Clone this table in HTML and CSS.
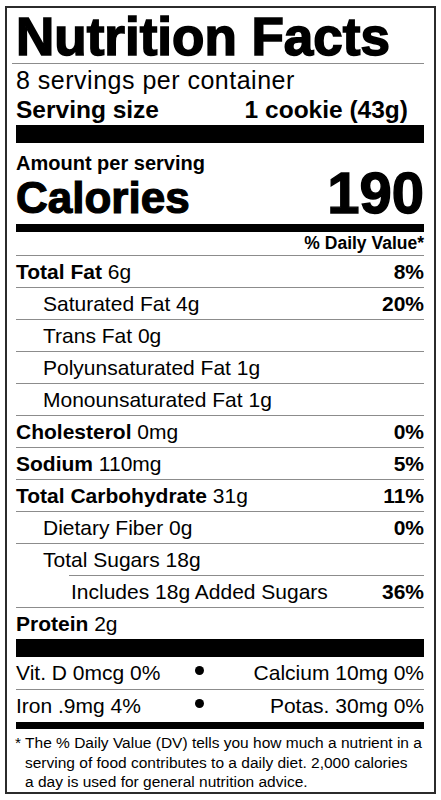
FILE: index.html
```html
<!DOCTYPE html>
<html lang="en">
<head>
  <meta charset="UTF-8">
  <meta name="viewport" content="width=device-width, initial-scale=1.0">
  <title>Nutrition Facts</title>
  <link rel="stylesheet" href="styles.css">
</head>
<body>
  <div class="label">
    <h1 class="title">Nutrition Facts</h1>
    <p class="servings">8 servings per container</p>
    <div class="serving-size">
      <span>Serving size</span>
      <span>1 cookie (43g)</span>
    </div>
    <div class="bar bar-thick"></div>

    <p class="amount">Amount per serving</p>
    <div class="calories">
      <span class="cal-label">Calories</span>
      <span class="cal-value">190</span>
    </div>
    <div class="bar bar-mid"></div>

    <div class="dv-head">% Daily Value*</div>

    <div class="row"><span><b>Total Fat</b> 6g</span><b>8%</b></div>
    <div class="row sub"><span>Saturated Fat 4g</span><b>20%</b></div>
    <div class="row sub"><span>Trans Fat 0g</span></div>
    <div class="row sub"><span>Polyunsaturated Fat 1g</span></div>
    <div class="row sub"><span>Monounsaturated Fat 1g</span></div>
    <div class="row"><span><b>Cholesterol</b> 0mg</span><b>0%</b></div>
    <div class="row"><span><b>Sodium</b> 110mg</span><b>5%</b></div>
    <div class="row"><span><b>Total Carbohydrate</b> 31g</span><b>11%</b></div>
    <div class="row sub"><span>Dietary Fiber 0g</span><b>0%</b></div>
    <div class="row sub"><span>Total Sugars 18g</span></div>
    <div class="row added"><span>Includes 18g Added Sugars</span><b>36%</b></div>
    <div class="row"><span><b>Protein</b> 2g</span></div>
    <div class="bar bar-thick bar-flush"></div>

    <div class="mineral first">
      <span>Vit. D 0mcg 0%</span>
      <span class="dot"></span>
      <span class="right">Calcium 10mg 0%</span>
    </div>
    <div class="mineral">
      <span>Iron .9mg 4%</span>
      <span class="dot"></span>
      <span class="right">Potas. 30mg 0%</span>
    </div>
    <div class="bar bar-foot"></div>

    <p class="footnote">* The % Daily Value (DV) tells you how much a nutrient in a<br>serving of food contributes to a daily diet. 2,000 calories<br>a day is used for general nutrition advice.</p>
  </div>
</body>
</html>
```

FILE: styles.css
```css
body {
  margin: 0;
  padding: 0;
  background: #fff;
  color: #000;
  font-family: "Liberation Sans", Arial, sans-serif;
}
p {
  margin: 0;
}
.label {
  box-sizing: border-box;
  width: 431px;
  margin: 6px 0 0 5px;
  padding: 2px 10px 0 9px;
  border: 2px solid #2b2b2b;
}
.title {
  margin: 0 0 0 -4px;
  padding-left: 4px;
  font-size: 53px;
  line-height: 53px;
  font-weight: bold;
  -webkit-text-stroke: 1.6px #000;
  border-bottom: 1px solid #8c8c8c;
}
.servings {
  margin-top: 2px;
  font-size: 25px;
  line-height: 29px;
  letter-spacing: 0.5px;
}
.serving-size {
  display: flex;
  justify-content: space-between;
  padding-right: 16px;
  font-size: 24.5px;
  line-height: 29px;
  font-weight: bold;
}
.bar {
  background: #000;
}
.bar-thick {
  height: 18px;
  margin-top: 1px;
}
.bar-flush {
  margin-top: 0;
}
.amount {
  margin-top: 10px;
  font-size: 20px;
  line-height: 20px;
  font-weight: bold;
}
.calories {
  display: flex;
  justify-content: space-between;
  align-items: baseline;
  height: 40px;
  line-height: 40px;
  font-weight: bold;
}
.cal-label {
  font-size: 44px;
  -webkit-text-stroke: 1.2px #000;
}
.cal-value {
  font-size: 58px;
  -webkit-text-stroke: 1.4px #000;
}
.bar-mid {
  height: 8px;
  margin-top: 11px;
}
.dv-head {
  text-align: right;
  font-size: 17.5px;
  line-height: 23px;
  font-weight: bold;
}
.row {
  display: flex;
  justify-content: space-between;
  height: 31px;
  border-top: 1px solid #8c8c8c;
  font-size: 21px;
  line-height: 31px;
}
.row.sub {
  padding-left: 27px;
}
.row.added {
  margin-left: 53px;
  padding-left: 2px;
}
.mineral {
  display: grid;
  grid-template-columns: 179px 9px 1fr;
  align-items: center;
  height: 32px;
  border-top: 1px solid #8c8c8c;
  font-size: 21px;
  line-height: 32px;
}
.mineral.first {
  border-top: none;
}
.mineral .right {
  text-align: right;
}
.dot {
  width: 9px;
  height: 9px;
  margin-bottom: 5px;
  border-radius: 50%;
  background: #000;
}
.bar-foot {
  height: 7px;
}
.footnote {
  padding: 4px 0 0 9px;
  text-indent: -10px;
  white-space: nowrap;
  font-size: 15.5px;
  line-height: 19.5px;
}
```
